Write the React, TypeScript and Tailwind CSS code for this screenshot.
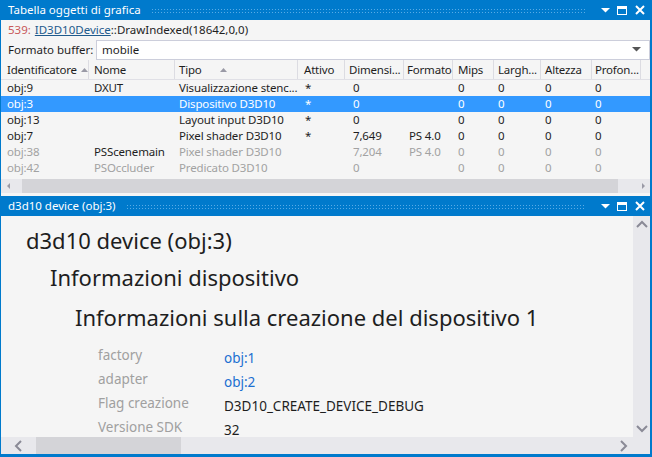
const cols = [
  { name: "Identificatore", w: "w-[87px] pl-[5px]", sort: true },
  { name: "Nome", w: "w-[86px] pl-[5px]" },
  { name: "Tipo", w: "w-[123px] pl-[4px]", sort: true, sortGap: "ml-[18px]" },
  { name: "Attivo", w: "w-[47px] pl-[6px]" },
  { name: "Dimensi...", w: "w-[59px] pl-[4px]" },
  { name: "Formato", w: "w-[49px] pl-[3px]" },
  { name: "Mips", w: "w-[41px] pl-[5px]" },
  { name: "Largh...", w: "w-[47px] pl-[4px]" },
  { name: "Altezza", w: "w-[51px] pl-[4px]" },
  { name: "Profon...", w: "w-[49px] pl-[3px]" },
];

const cellW = [
  "w-[87px] pl-[5px]",
  "w-[86px] pl-[5px]",
  "w-[123px] pl-[4px]",
  "w-[47px] pl-[7px]",
  "w-[59px] pl-[8px]",
  "w-[49px] pl-[5px]",
  "w-[41px] pl-[5px]",
  "w-[47px] pl-[4px]",
  "w-[51px] pl-[4px]",
  "w-[49px] pl-[3px]",
];

const rows = [
  { cells: ["obj:9", "DXUT", "Visualizzazione stenc...", "*", "0", "", "0", "0", "0", "0"] },
  { cells: ["obj:3", "", "Dispositivo D3D10", "*", "0", "", "0", "0", "0", "0"], selected: true },
  { cells: ["obj:13", "", "Layout input D3D10", "*", "0", "", "0", "0", "0", "0"] },
  { cells: ["obj:7", "", "Pixel shader D3D10", "*", "7,649", "PS 4.0", "0", "0", "0", "0"] },
  { cells: ["obj:38", "PSScenemain", "Pixel shader D3D10", "", "7,204", "PS 4.0", "0", "0", "0", "0"], dim: true },
  { cells: ["obj:42", "PSOccluder", "Predicato D3D10", "", "0", "", "0", "0", "0", "0"], dim: true },
];

const props = [
  { label: "factory", value: "obj:1", link: true },
  { label: "adapter", value: "obj:2", link: true },
  { label: "Flag creazione", value: "D3D10_CREATE_DEVICE_DEBUG" },
  { label: "Versione SDK", value: "32" },
];

const TitleBar = ({ title }: { title: string }) => (
  <div className="flex h-5 shrink-0 items-center bg-[#007acc] pl-[7px] pr-[5px] text-white">
    <span className="whitespace-nowrap text-[11.5px] leading-none">{title}</span>
    <div className="ml-[10px] mr-[16px] h-[5px] flex-1 bg-[radial-gradient(circle,#58abe6_0.7px,transparent_1px)] bg-[length:3px_3px]" />
    <svg width="9" height="6" viewBox="0 0 9 6" className="mr-[7px]">
      <path d="M0 1h9L4.5 5.5z" fill="#fff" />
    </svg>
    <svg width="10" height="9" viewBox="0 0 10 9" className="mr-[8px]">
      <rect x="0.5" y="0.5" width="9" height="8" fill="none" stroke="#fff" />
      <rect x="0" y="0" width="10" height="3" fill="#fff" />
    </svg>
    <svg width="10" height="10" viewBox="0 0 10 10">
      <path d="M1 1l8 8M9 1l-8 8" stroke="#fff" strokeWidth="2" />
    </svg>
  </div>
);

const Chevron = ({ d }: { d: string }) => (
  <svg width="12" height="12" viewBox="0 0 12 12">
    <path d={d} fill="none" stroke="#8a8a96" strokeWidth="2" />
  </svg>
);

export default function App() {
  return (
    <div className="flex h-[457px] w-[652px] flex-col border-b-[3px] border-l border-r-2 border-[#007acc] bg-[#f5f5f5] font-['Segoe_UI','Noto_Sans',sans-serif] text-[#1e1e1e]">
      <TitleBar title="Tabella oggetti di grafica" />

      <div className="flex h-[19px] items-center whitespace-nowrap pl-[7px] text-[11.5px]">
        <span className="text-[#c8585a]">539:</span>
        <span className="ml-[4px] text-[#1e5a8c] underline">ID3D10Device</span>
        <span>::DrawIndexed(18642,0,0)</span>
      </div>

      <div className="flex h-[21px] items-center text-[11.5px]">
        <span className="w-[95px] whitespace-nowrap pl-[7px]">Formato buffer:</span>
        <div className="flex h-[20px] flex-1 items-center border border-[#cccedb] bg-white pl-[5px] pr-[8px]">
          <span className="flex-1">mobile</span>
          <svg width="9" height="5" viewBox="0 0 9 5">
            <path d="M0 0h9L4.5 4.5z" fill="#555" />
          </svg>
        </div>
      </div>

      <div className="flex h-[20px] items-center border-b border-[#e0e0e6] pl-[1px] text-[11.5px] tracking-[-0.2px]">
        {cols.map((c) => (
          <div key={c.name} className={`${c.w} flex h-full shrink-0 items-center overflow-hidden whitespace-nowrap border-r border-[#dcdce2]`}>
            <span>{c.name}</span>
            {c.sort && (
              <svg width="7" height="4" viewBox="0 0 7 4" className={`shrink-0 ${c.sortGap ?? "ml-[4px]"}`}>
                <path d="M0 4h7L3.5 0z" fill="#9a9aa6" />
              </svg>
            )}
          </div>
        ))}
      </div>

      <div className="flex flex-col text-[11.5px] tracking-[-0.15px]">
        {rows.map((r) => (
          <div
            key={r.cells[0]}
            className={`flex h-4 items-center pl-[1px] ${r.selected ? "bg-[#3399ff] text-white" : ""} ${r.dim ? "text-[#a2a2a2]" : ""}`}
          >
            {r.cells.map((v, i) => (
              <span
                key={i}
                className={`${cellW[i]} shrink-0 overflow-hidden whitespace-nowrap ${r.dim && v === "PSScenemain" ? "text-[#1e1e1e]" : ""}`}
              >
                {v}
              </span>
            ))}
          </div>
        ))}
      </div>

      <div className="mt-[3px] flex h-[14px] items-center bg-[#e8e8ec]">
        <svg width="18" height="10" viewBox="0 0 18 10">
          <path d="M9 2v6L6 5z" fill="#9a9aa6" />
        </svg>
        <div className="ml-[3px] h-full w-[596px] bg-[#d4d4d8]" />
        <div className="flex-1" />
        <svg width="14" height="10" viewBox="0 0 14 10">
          <path d="M6 2v6l3-3z" fill="#9a9aa6" />
        </svg>
      </div>

      <div className="h-[3px]" />
      <TitleBar title="d3d10 device (obj:3)" />

      <div className="flex min-h-0 flex-1 flex-col">
        <div className="flex min-h-0 flex-1">
          <div className="flex-1 overflow-hidden whitespace-nowrap pt-[10px]">
            <div className="pl-[25px] text-[22px] leading-[28px]">d3d10 device (obj:3)</div>
            <div className="mt-[9px] pl-[49px] text-[22px] leading-[28px]">Informazioni dispositivo</div>
            <div className="mt-[12px] pl-[74px] text-[22px] leading-[28px]">
              Informazioni sulla creazione del dispositivo 1
            </div>
            <div className="mt-[14px] flex flex-col pl-[97px] text-[13.5px] leading-[20px]">
              {props.map((p) => (
                <div key={p.label} className="flex h-6 items-start">
                  <span className="w-[126px] text-[#a0a0a0]">{p.label}</span>
                  <span className={`mt-[3px] ${p.link ? "text-[#1c6fd1]" : ""}`}>{p.value}</span>
                </div>
              ))}
            </div>
          </div>
          <div className="flex w-[17px] flex-col items-center justify-between bg-[#e8e8ec] py-[3px]">
            <Chevron d="M1 8l5-5 5 5" />
            <Chevron d="M1 4l5 5 5-5" />
          </div>
        </div>
        <div className="flex h-[17px] items-center bg-[#e8e8ec]">
          <div className="flex w-[35px] justify-center">
            <Chevron d="M8 1L3 6l5 5" />
          </div>
          <div className="h-full w-[145px] bg-[#d4d4d8]" />
          <div className="flex-1" />
          <div className="mr-[21px] flex">
            <Chevron d="M4 1l5 5-5 5" />
          </div>
        </div>
      </div>
    </div>
  );
}
